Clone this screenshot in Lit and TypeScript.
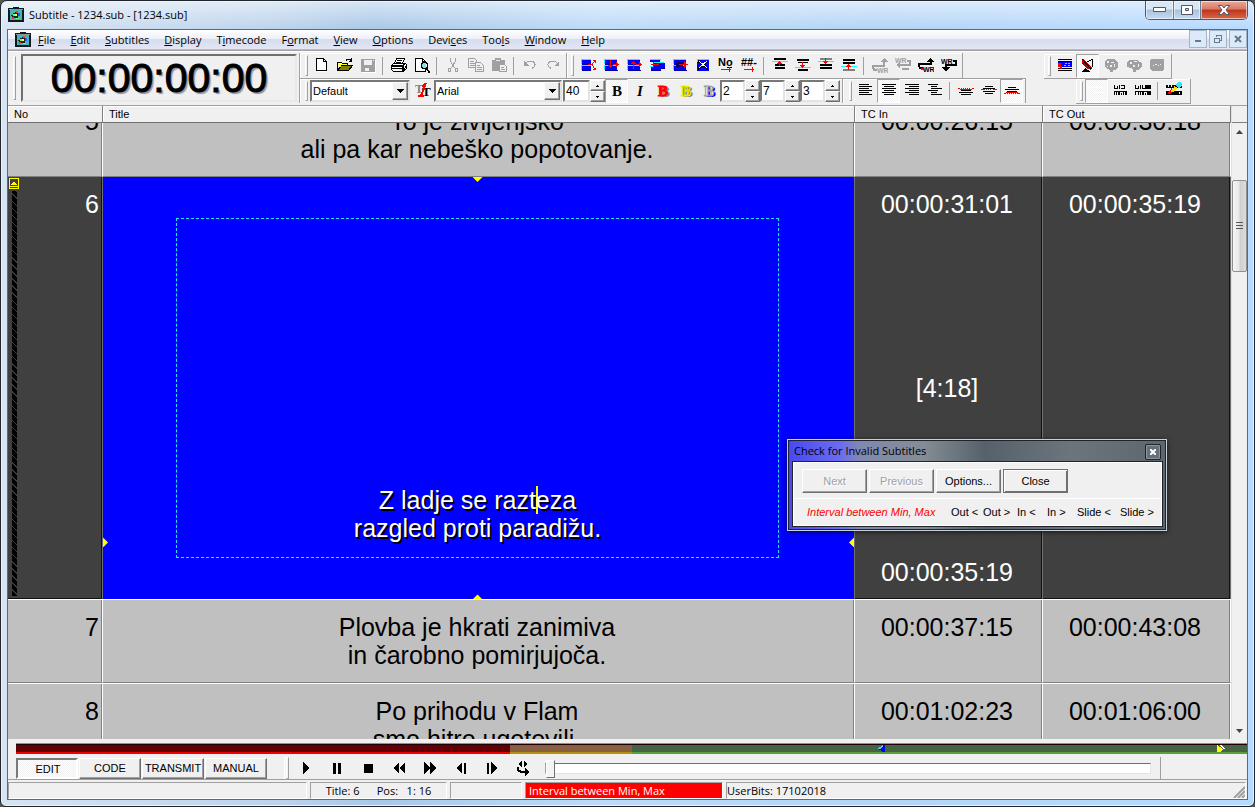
import { LitElement, html, css, svg, nothing, TemplateResult } from "lit";
import { customElement, state, query } from "lit/decorators.js";
import { classMap } from "lit/directives/class-map.js";

type Glyph = unknown;

/* Pixel runs: each "x y w h" group becomes one filled rectangle. */
const px = (fill: string, runs: string): Glyph => {
  const d = runs
    .split(",")
    .map((r) => r.trim().split(" "))
    .map(([x, y, w, h]) => `M${x} ${y}h${w}v${h}h-${w}z`)
    .join("");
  return svg`<path fill=${fill} d=${d}></path>`;
};
const shape = (fill: string, d: string): Glyph => svg`<path fill=${fill} d=${d}></path>`;
const line = (stroke: string, d: string, w = 1): Glyph =>
  svg`<path fill="none" stroke=${stroke} stroke-width=${w} d=${d}></path>`;
const label = (fill: string, x: number, y: number, size: number, text: string, family = "Liberation Sans"): Glyph =>
  svg`<text x=${x} y=${y} fill=${fill} font-size=${size} font-weight="700" font-family=${family}>${text}</text>`;

const G = "#a0a0a0";
const block = (extra: Glyph): Glyph => [
  px("#00ffff", "1 2 13 1,1 2 1 5,1 8 13 1,1 8 1 5"),
  px("#0000ff", "2 3 12 4,2 9 12 4"),
  px("#0000a0", "2 7 13 1,2 13 13 1"),
  extra,
];

const icons: Record<string, Glyph> = {
  new: [shape("#fff", "M3 2h6l4 4v9h-10z"), line("#000", "M2.5 1.5h7l3 3v9h-10zM9.5 1.5v3h3")],
  open: [
    shape("#ffff80", "M1 5h4l1 1h5v3h-10z"),
    shape("#808000", "M1 14l4-6h11l-4 6z"),
    line("#000", "M.5 13.5v-8h4l1 1h5v2M.5 13.5l4-5h11l-4 5zM9 3.5c1-2 4-2 5 0M14.5 1v3h-3"),
    line("#ffff00", "M2 7.5h8M2 9.500h2"),
  ],
  save: [px(G, "1 2 14 13"), px("#f0f0f0", "4 3 8 5,5 11 5 3,13 3 1 1"), px(G, "9 11 2 3"), px("#fff", "15 3 1 13,2 15 14 1")],
  print: [
    shape("#fff", "M5 1h8l-2 6h-8z"),
    line("#000", "M5.500 1.500h8l-2 5h-8zM6 3.500h5M5 5.500h5"),
    shape("#fff", "M1 8l2-2h12v6l-3 3h-10l-1-2z"),
    line("#000", "M.5 8.500l2-2h12l1 1v4l-3 3h-10l-2-2zM.5 8.500h11l3-2M11.500 9v5M1 11.500h10M13 12.500l2-3"),
    px("#ffff00", "8 12 3 1"),
    px("#000", "1 9 10 1,12 8 1 6"),
  ],
  preview: [
    shape("#fff", "M1 1h8l3 3v11h-11z"),
    line("#000", "M1.500 1.500h7l3 3v10h-10zM8.500 1.500v3h3"),
    shape("#80e0e8", "M8 6h4v5h-4z"),
    line("#000", "M8.500 5.500h4v1h1v4h-1v1h-4v-1h-1v-4h1z"),
    line("#000", "M12 11l4 5", 2),
  ],
  cut: [
    line(G, "M5.500 1v3l4 7M10.500 1v3l-4 7", 1),
    line(G, "M3.500 11.500h2v3h-2zM10.500 11.500h2v3h-2z", 1),
    px(G, "7 7 2 2"),
  ],
  copy: [line(G, "M.5 1.500h6l2 2v7h-8zM2 4.500h4M2 6.500h5M2 8.500h5"), shape("#f0f0f0", "M7 5h6l3 3v7h-9z"), line(G, "M7.500 5.500h5l3 3v6h-8zM9 8.500h3M9 10.500h5M9 12.500h5")],
  paste: [px(G, "1 3 13 11,4 1 6 3"), px("#f0f0f0", "5 3 4 1"), shape("#f0f0f0", "M8 7h6l2 2v6h-8z"), line(G, "M8.500 7.500h5l2 2v5h-7zM10 10.500h3M10 12.500h4")],
  undo: [line(G, "M3 6.500c3-3 10-3 10 1c0 2-1 3-3 4"), shape(G, "M2 4v5h5z")],
  redo: [line(G, "M13 6.500c-3-3-10-3-10 1c0 2 1 3 3 4"), shape(G, "M14 4v5h-5z")],
  split: block([px("#f0f0f0", "11 2 4 12"), line("#ff0000", "M8 7.500h4l3-4M12 7.500l3 5M13 3.500h2v2M13 12.500h2v-2")]),
  insertDown: block(line("#ff0000", "M7.500 3v8M5 8.500h5M6 9.500h3M10 7.500h6M13.500 5v5M14.500 6v3")),
  insertUp: block(line("#ff0000", "M7.500 4v8M5 6.500h5M6 5.500h3M10 7.500h6M13.500 5v5M14.500 6v3")),
  joinLeft: [px("#00ffff", "1 2 11 1,5 5 10 1,1 9 10 1"), px("#0000ff", "1 3 10 2,5 6 11 5,2 10 10 3"), px("#0000a0", "2 13 10 1"), px("#000080", "12 11 4 1"), line("#ff0000", "M2 7.500h8M4.500 5v5")],
  joinRight: block([px("#000080", "4 5 7 5"), line("#ff0000", "M7 7.500h9M13.500 5v5M12.500 4v7")]),
  remove: [px("#0000ff", "2 2 12 12"), px("#00ffff", "2 2 12 1,2 2 1 3"), px("#000080", "2 8 12 1"), line("#000", "M3 4l10 8M13 4l-10 8", 2), line("#fff", "M4 4l8 7M12 4l-8 7")],
  number: [label("#000", 0, 9, 11, "No"), px("#000", "9 10 5 1"), line("#ff0000", "M3 12.500h10M11.500 10v5")],
  hash: [label("#000", 0, 9, 11, "##-"), line("#ff0000", "M3 12.500h10M11.500 10v5")],
  topIn: [px("#000", "2 1 12 2,3 7 10 2,3 10 10 2"), px("#00ffff", "0 4 16 1"), line("#ff0000", "M7.500 4v5M5 6.500h5M6 5.500h3")],
  topOut: [px("#000", "2 2 12 2,3 5 10 1,3 12 10 2"), px("#00ffff", "0 10 16 1"), line("#ff0000", "M7.500 5v6M5 8.500h5M6 9.500h3")],
  botIn: [px("#000", "2 7 12 2,2 10 12 2"), px("#808080", "2 1 12 2"), px("#00ffff", "0 4 16 1"), line("#ff0000", "M7.500 1v6M5 4.500h5M6 5.500h3")],
  botOut: [px("#000", "2 2 12 2,2 5 12 2"), px("#808080", "2 12 12 2"), px("#00ffff", "0 9 16 1"), line("#ff0000", "M7.500 7v6M5 9.500h5M6 8.500h3")],
  wr1: [line(G, "M5 12.500h-3l-1-2v-2h11v-4", 2), shape(G, "M8 5l4-4l4 4z"), label(G, 5, 16, 7, "WR")],
  wr2: [label(G, 0, 6, 7, "WR"), line(G, "M12 3.500h3v4h-12M7 11.500h7", 2), shape(G, "M5 4v7l-4-3z")],
  wr3: [line("#000", "M5 11h-3l-1-2v-2h12v-3", 2), shape("#000", "M8 5l4-4l4 4z"), px("#ff0000", "3 11 3 2"), label("#000", 5, 15, 7, "WR")],
  wr4: [label("#000", 0, 7, 7, "WR"), line("#000", "M12 4h3v4h-10v4", 2), shape("#000", "M1 10h8l-4 5z")],
  left: px("#000", "1 2 10 1,1 4 13 1,1 6 10 1,1 8 13 1,1 10 10 1,1 12 13 1"),
  center: px("#000", "1 2 14 1,3 4 10 1,1 6 14 1,3 8 10 1,1 10 14 1,3 12 10 1"),
  right: px("#000", "1 2 14 1,5 4 10 1,1 6 14 1,5 8 10 1,1 10 14 1,5 12 10 1"),
  indent: px("#000", "1 2 10 1,4 4 6 1,4 6 11 1,1 8 10 1,4 10 6 1,4 12 11 1"),
  vTop: [px("#000", "3 8 10 1,1 10 14 1,3 12 10 1"), px("#ff0000", "0 6 2 1,3 6 1 1,5 6 1 1,7 6 1 1,9 6 1 1,11 6 1 1,14 6 2 1,2 7 12 1")],
  vMid: [px("#000", "4 4 8 1,2 6 12 1,2 9 12 1,4 11 8 1"), px("#ff0000", "0 7 4 1,5 7 1 1,7 7 1 1,9 7 1 1,12 7 4 1")],
  vBot: [px("#000", "4 5 8 1,1 7 14 1,3 9 10 1"), px("#ff0000", "0 11 2 1,3 11 1 1,5 11 1 1,7 11 1 1,9 11 1 1,11 11 1 1,13 11 3 1,2 10 12 1")],
  screen: [px("#000", "1 2 14 1,1 4 14 1,1 11 14 1,1 13 14 1"), px("#0000ff", "1 5 14 5"), px("#00ffff", "8 6 2 1,11 6 2 1,7 8 2 1,11 8 2 1"), px("#ff0000", "1 6 3 4,3 9 2 3")],
  dish: [shape("#c00000", "M2 2l3 1l7 8l-1 2l-5-2l-4-5z"), line("#000", "M2 2l9 10M7 5l6-3M12.500 3v7"), shape("#000", "M1 15l4-4l5 3v1z"), px("#fff", "13 1 1 1,14 3 1 1")],
  reel: [shape(G, "M4 2h7l4 4v5l-3 2h-2v2h-3v-2l-5-3v-5z"), px("#f0f0f0", "4 4 2 2,8 5 3 1,7 8 2 2,11 7 1 3,4 9 1 1")],
  reel2: [shape(G, "M3 3h8l5 3v4l-4 3h-2v2h-3v-3l-6-2v-4z"), px("#f0f0f0", "4 5 2 2,8 4 3 1,7 8 2 2,12 7 1 3")],
  balloon: [shape(G, "M2 2h12l1 1v9l-2 2h-10l-2-2v-9z"), px("#f0f0f0", "4 8 1 1,6 7 2 1,9 8 1 1,11 7 1 1")],
  blank: px("#fff", "1 5 3 1,6 5 4 1,12 5 2 1,2 10 4 1,8 10 6 1"),
  tc1: px("#000", "2 3 1 4,2 6 4 1,5 4 1 3,7 3 1 4,9 3 4 1,12 4 1 3,9 6 4 1,2 9 13 1,2 9 1 4,4 10 1 3,6 10 2 3,9 11 1 2,11 10 1 3,13 10 2 3"),
  tc2: px("#000", "0 3 1 4,0 6 4 1,3 4 1 3,5 3 1 4,7 3 1 4,7 6 3 1,10 3 6 4,0 9 12 1,0 9 1 4,3 10 1 3,5 10 1 3,7 10 2 3,10 11 1 2,12 9 4 4"),
  paint: [px("#000", "0 3 16 3,0 9 16 4"), px("#f0f0f0", "2 3 1 2,5 3 1 2,2 10 1 2,13 10 1 2"), line("#ff0000", "M3 12l4-5", 3), line("#ffe000", "M6 10l4-5", 3), shape("#40e0e8", "M9 3l3-3h2l2 2v2l-3 2z")],
  font: [
    label("#808080", 0, 11, 12, "T", "Liberation Serif"),
    label("#000", 7, 14, 13, "T", "Liberation Serif"),
    line("#ff0000", "M11 1l-5 13M7 5l3-3M3 14h6", 2),
  ],
  play: shape("#000", "M5 2l6 6l-6 6z"),
  pause: px("#000", "4 3 3 11,9 3 3 11"),
  stop: px("#000", "4 4 9 9"),
  rewind: shape("#000", "M8 2v12l-6-6zM14 2v12l-6-6z"),
  forward: shape("#000", "M2 2v12l6-6zM8 2v12l6-6z"),
  stepBack: [shape("#000", "M9 2v12l-6-6z"), px("#000", "11 3 2 11")],
  stepFwd: [shape("#000", "M7 2v12l6-6z"), px("#000", "3 3 2 11")],
  loop: [shape("#000", "M7 1v6l-4-3zM9 1v6l4-3zM10 8l5 4l-5 4z"), line("#000", "M3 7v3l3 2h5", 2)],
};

const icon = (name: string): TemplateResult =>
  html`<svg class="ic" viewBox="0 0 16 16" shape-rendering="crispEdges" aria-hidden="true">${icons[name]}</svg>`;

const appLogo = html`<svg class="logo" viewBox="0 0 16 16" shape-rendering="crispEdges" aria-hidden="true">
  <path fill="#101820" d="M5 0h6v1h5v14h-16v-14h5z"></path>
  <path fill="#8898a0" d="M1 2h14v1h-14z"></path>
  <path fill="#40b8b8" d="M2 3h12v10h-12z"></path>
  <path fill="#222" d="M5 6h2v-1h3v1h2v3h-2v2h-6v-2h-1v-1h2z"></path>
  <path fill="#ff3030" d="M8 4h2v2h-2zM4 10h2v2h-2z"></path>
  <path fill="#3050ff" d="M10 6h2v3h-2z"></path>
  <path fill="#60ff60" d="M5 7h2v2h-2zM8 11h3v1h-3z"></path>
  <path fill="#ffff60" d="M7 7h2v2h-2z"></path>
</svg>`;

const MENU: [string, number][] = [
  ["File", 0], ["Edit", 0], ["Subtitles", 0], ["Display", 0], ["Timecode", 1], ["Format", 1],
  ["View", 0], ["Options", 0], ["Devices", 4], ["Tools", 3], ["Window", 0], ["Help", 0],
];

interface Row { no: number; lines: string[]; tin: string; out: string; dur?: string; }
const ROWS: Row[] = [
  { no: 5, lines: ["To je življenjsko", "ali pa kar nebeško popotovanje."], tin: "00:00:26:15", out: "00:00:30:18" },
  { no: 6, lines: ["Z ladje se razteza", "razgled proti paradižu."], tin: "00:00:31:01", out: "00:00:35:19", dur: "[4:18]" },
  { no: 7, lines: ["Plovba je hkrati zanimiva", "in čarobno pomirjujoča."], tin: "00:00:37:15", out: "00:00:43:08" },
  { no: 8, lines: ["Po prihodu v Flam", "smo hitro ugotovili,"], tin: "00:01:02:23", out: "00:01:06:00" },
];

@customElement("app-root")
export class AppRoot extends LitElement {
  @state() private mode = "EDIT";
  @query(".sheet") private sheet!: HTMLElement;

  protected firstUpdated(): void {
    this.sheet.scrollTop = 30;
  }

  static styles = css`
    :host { display: block; font: 11px/14px "Liberation Sans", Arial, sans-serif; color: #000; }
    * { box-sizing: border-box; }
    button, input, select { font: inherit; color: inherit; margin: 0; padding: 0; border: 0; border-radius: 0; background: none; }
    svg { display: block; flex: none; }
    .ic { width: 16px; height: 16px; }
    .segoe { font: 11px/14px "Open Sans", "Noto Sans", sans-serif; }
    .desk { background: #555; height: 100vh; min-height: 600px; }
    .window {
      position: relative; height: 100%; display: flex; flex-direction: column;
      border: 1px solid #20242c; border-radius: 7px 7px 6px 6px; padding: 0 6px 6px;
      background: linear-gradient(180deg, #fff8 0, #fff0 28px), linear-gradient(90deg, #d6e4f3 0, #bcd3ec 22%, #a9c8e8 30%, #bddbf8 48%, #b4d5f6 70%, #b7daff 100%);
      box-shadow: inset 0 0 0 1px #e8f4ff;
    }
    .titlebar { height: 28px; flex: none; display: flex; align-items: center; padding-left: 1px; }
    .logo { width: 16px; height: 16px; }
    .titlebar h1 { margin: 0 0 0 5px; font-size: 11px; font-weight: 400; flex: 1; }
    .sys { align-self: flex-start; display: flex; height: 19px; border: 1px solid #4a5a70; border-top: 0; border-radius: 0 0 5px 5px; overflow: hidden; }
    .sys button { width: 27px; display: grid; place-items: center; background: linear-gradient(#d9e6f4 45%, #a9c1dc 50%, #c6dcf3); box-shadow: inset 0 0 0 1px #ffffff90; }
    .sys button + button { border-left: 1px solid #6b7c93; }
    .sys .x { width: 47px; background: linear-gradient(#e9a99a 0, #d87a66 45%, #c0341b 50%, #d2694a); }
    .client { flex: 1; min-height: 0; display: flex; flex-direction: column; border: 1px solid #5d6978; background: #f0f0f0; }
    .menubar { height: 20px; flex: none; display: flex; align-items: center; padding-left: 7px; background: linear-gradient(#fff 0, #eef0f9 45%, #d6dded 50%, #e2e6f5 100%); border-bottom: 1px solid #b6bccc; }
    .menubar nav { display: flex; gap: 15px; margin-left: 7px; flex: 1; }
    .menubar u { text-underline-offset: 1px; }
    .mdi { display: flex; gap: 2px; align-self: stretch; }
    .mdi button { width: 18px; height: 18px; display: grid; place-items: center; border: 1px solid #a5b5c9; background: #dce9f8; }

    .bars { flex: none; height: 56px; display: flex; padding: 2px 0; border-top: 1px solid #a0a0a0; border-bottom: 1px solid #a0a0a0; box-shadow: inset 0 1px #fff; }
    .clock { width: 292px; display: flex; align-items: center; border-right: 1px solid #a0a0a0; padding: 1px 2px 1px 3px; gap: 3px; }
    .clock output { flex: 1; align-self: stretch; display: grid; place-items: center; border: 2px solid; border-color: #707070 #e8e8e8 #e8e8e8 #707070; font-size: 41px; line-height: 44px; -webkit-text-stroke: 1px #000; text-shadow: 2px 2px 1px #8c93a4; }
    .grip { width: 3px; align-self: stretch; margin: 2px; border: 1px solid; border-color: #fff #a0a0a0 #a0a0a0 #fff; flex: none; }
    .stack { display: flex; flex-direction: column; }
    .line { display: flex; height: 26px; }
    .line .band { align-self: stretch; }
    .band { display: flex; align-items: center; padding: 0 2px; border-right: 1px solid #a0a0a0; box-shadow: inset 1px 1px #fff; }
    .line .first { padding-left: 3px; }
    .line + .line { height: 25px; }
    .line + .line .band { border-top: 1px solid #a0a0a0; }
    .line + .line .band + .band { padding-left: 4px; }
    .tb { width: 23px; height: 24px; flex: none; display: grid; place-items: start center; padding: 3px 0 0 1px; }
    .on { background: repeating-conic-gradient(#fff 0 25%, #f0f0f0 0 50%) 0 0 / 2px 2px; border: 1px solid; border-color: #a0a0a0 #fff #fff #a0a0a0; }
    .tb.on { padding-top: 2px; }
    .sep { width: 1px; height: 18px; margin: 0 4px 0 3px; background: #a0a0a0; flex: none; }
    .sunk { border: 2px solid; border-color: #787878 #e3e3e3 #e3e3e3 #787878; background: #fff; }
    .combo { display: flex; height: 22px; margin-right: 1px; }
    .combo select { flex: 1; min-width: 0; appearance: none; padding-left: 1px; background: #fff; font-size: 11px; line-height: 15px; }
    .raised { border: 1px solid; border-color: #fff #707070 #707070 #fff; background: #f0f0f0; box-shadow: inset -1px -1px #a0a0a0; }
    .drop { width: 16px; display: grid; place-items: center; }
    .w98 { width: 100px; }
    .w127 { width: 128px; }
    .spin { display: flex; height: 22px; }
    .spin input { width: 25px; padding-left: 1px; font-size: 12px; }
    .spin.wide input { width: 27px; }
    .spin span { display: flex; flex-direction: column; width: 15px; }
    .spin span button { flex: 1; display: grid; place-items: center; }
    .b { font: 700 15px/18px "Liberation Serif", serif; }
    .i { font-style: italic; }
    .red { color: #f00; text-shadow: 2px 1px #808080; -webkit-text-stroke: 1px #f00; }
    .yel { color: #909000; text-shadow: 2px 1px #808080; -webkit-text-stroke: 1px #ee0; }
    .blu { color: #f0f0f0; text-shadow: 2px 1px #00f; -webkit-text-stroke: 1px #999; }
    .extras { margin: 1px 56px 0 auto; display: flex; flex-direction: column; align-items: flex-end; }
    .extras .band { height: 25px; border-bottom: 1px solid #a0a0a0; padding-right: 5px; }
    .extras .upper { margin-right: 19px; padding-right: 3px; }

    .body { flex: 1; min-height: 0; display: flex; }
    .sheet { flex: 1; min-width: 0; overflow: hidden; }
    table { width: 100%; table-layout: fixed; border-collapse: separate; border-spacing: 0; font-size: 25px; line-height: 28px; }
    .c1 { width: 95px; }
    .c3 { width: 188px; }
    th { position: sticky; top: 0; z-index: 1; height: 17px; padding: 0 6px; text-align: left; font: 11px/14px "Liberation Sans", Arial, sans-serif; background: #f0f0f0; border-right: 1px solid #808080; border-bottom: 1px solid #707070; box-shadow: inset 1px 1px #fff; }
    td { height: 84px; padding: 13px 5px 0 2px; vertical-align: top; text-align: center; background: #c0c0c0; border-top: 1px solid #fff; border-bottom: 1px solid #808080; border-right: 1px solid #fff; box-shadow: inset -1px 0 #808080; }
    td.no { text-align: right; padding-right: 3px; }
    .cur td { height: 1px; padding: 0; background: #404040; color: #fff; border-top: 0; border-bottom: 0; border-right-color: #707070; box-shadow: inset -1px -1px #111; }
    .cell { height: 100%; display: flex; }
    .times { flex-direction: column; justify-content: space-between; align-items: center; padding: 13px 3px 13px 0; }
    .mark { width: 12px; display: flex; flex-direction: column; align-items: center; gap: 2px; padding: 1px 0 3px; }
    .mark svg { width: 10px; height: 11px; }
    .hatch { flex: 1; width: 5px; background: repeating-linear-gradient(45deg, #000 0 4px, #3a3a3a 4px 5px); }
    .num { flex: 1; padding: 13px 3px; }
    .cur td.video { background: #00f; box-shadow: none; }
    .picture { position: relative; aspect-ratio: 16 / 9; padding: 41px 75px 41px 73px; display: flex; }
    .safe { flex: 1; border: 1px dashed #20e8ff; display: flex; flex-direction: column; justify-content: flex-end; padding-bottom: 15px; text-shadow: 2px 2px #000; }
    .safe p { margin: 0; }
    .caret { border-left: 2px solid #ff0; margin-right: -2px; }
    .tip { position: absolute; width: 10px; height: 5px; background: #ff0; }
    .tip.t { top: 0; left: 50%; margin-left: -6px; clip-path: polygon(0 0, 100% 0, 50% 100%); }
    .tip.bt { bottom: 0; left: 50%; margin-left: -6px; clip-path: polygon(0 100%, 100% 100%, 50% 0); }
    .tip.l { width: 5px; height: 10px; left: 0; bottom: 52px; clip-path: polygon(0 0, 100% 50%, 0 100%); }
    .tip.r { width: 5px; height: 10px; right: 0; bottom: 52px; clip-path: polygon(100% 0, 0 50%, 100% 100%); }
    .scroll { width: 16px; display: flex; flex-direction: column; background: #f0f0f0; border-left: 1px solid #e0e0e0; }
    .stub { height: 17px; border-bottom: 1px solid #808080; flex: none; }
    .scroll button { height: 17px; display: grid; place-items: center; flex: none; }
    .rail { flex: 1; padding-top: 40px; }
    .thumb { height: 92px; border: 1px solid #8f8f8f; border-radius: 2px; background: linear-gradient(90deg, #f5f5f5 0, #e8e8e8 45%, #cfcfd2 55%, #dcdcdc); display: grid; place-items: center; }

    .track { flex: none; height: 11px; margin: 4px 0 0 8px; display: flex; border-top: 1px solid #909090; }
    .track div { border-top: 1px solid #200008; border-bottom: 2px solid; position: relative; }
    .track .seg1 { flex: 494; background: #600000; border-bottom-color: #f00000; }
    .track .seg2 { flex: 122; background: #886040; border-bottom-color: #b89010; }
    .track .seg3 { flex: 615; background: #446444; border-bottom-color: #58a040; }
    .seg3 svg { position: absolute; top: 0; width: 8px; height: 7px; }
    .in { left: 40%; }
    .outp { right: 22px; }
    .controls { flex: none; height: 26px; display: flex; align-items: center; padding: 3px 0 0 8px; border-bottom: 1px solid #a0a0a0; }
    .mode { width: 62px; height: 21px; margin-right: 1px; text-align: center; font-size: 11px; white-space: nowrap; }
    .mode.on { border: 2px solid; border-color: #787878 #fff #fff #787878; padding: 2px 0 0 2px; }
    .transport { display: flex; align-items: center; align-self: stretch; margin-left: 16px; border-left: 1px solid #fff; }
    .transport button { width: 31px; display: grid; place-items: center; padding-left: 1px; }
    .transport .grip { margin: 0 1px; }
    .seek { flex: 1; appearance: none; height: 20px; margin-left: 7px; background: none; }
    .seek::-webkit-slider-runnable-track { height: 11px; background: #fff; border: 1px solid; border-color: #707070 #e3e3e3 #e3e3e3 #a0a0a0; }
    .seek::-webkit-slider-thumb { appearance: none; width: 9px; height: 18px; margin-top: -4px; background: #f4f4f4; border: 1px solid; border-color: #fff #707070 #707070 #fff; }
    .tail { width: 87px; align-self: stretch; margin-left: 9px; border-left: 1px solid #a0a0a0; }
    .status { flex: none; height: 19px; display: flex; gap: 3px; padding: 2px 1px 0 0; }
    .status div { border: 1px solid; border-color: #a0a0a0 #fff #fff #a0a0a0; white-space: pre; padding: 0 3px; line-height: 15px; }
    .s1 { width: 299px; }
    .s2 { width: 137px; text-align: center; }
    .s3 { width: 72px; }
    .status .alert { width: 198px; background: #f00; color: #fff; }
    .s5 { flex: 1; display: flex; justify-content: space-between; align-items: flex-end; }
    .status .s5 { padding: 0; }

    .dialog { position: absolute; top: 438px; right: 87px; width: 380px; border: 1px solid #c8d0d8; outline: 1px solid #20242a; outline-offset: -2px; padding: 1px 4px 4px 5px; background: linear-gradient(90deg, #4848f0 0, #6c6cf0 14%, #8088b0 19%, #848d94 36%, #56616b 52%, #6c757c 75%, #5c666e 100%); box-shadow: 0 1px 5px #000a; }
    .dialog header { display: flex; align-items: center; justify-content: space-between; height: 21px; padding: 0 1px; }
    .dialog h2 { margin: 0 0 2px; font: inherit; }
    .dialog header button { width: 16px; height: 16px; border: 1px solid #222; border-radius: 2px; background: #66717b; box-shadow: inset 0 0 0 1px #8d97a0; display: grid; place-items: center; }
    .pane { border: 1px solid #fff; outline: 1px solid #20242a; background: #f0f0f0; }
    .keys { display: flex; gap: 2px; height: 36px; padding: 6px 8px; border-bottom: 1px solid #fff; }
    .keys button { width: 65px; height: 24px; }
    .keys button:disabled { color: #a0a0a0; text-shadow: 1px 1px #fff; }
    .keys .def { border-color: #707070; box-shadow: inset 1px 1px #fff, inset -1px -1px #707070; }
    .links { display: grid; grid-template-columns: 144px 32px 34px 30px 30px 43px auto; align-items: center; justify-items: start; height: 26px; padding-left: 13px; white-space: nowrap; }
    .links em { color: #f00; }
  `;

  private tb(name: string, label: string, on = false, disabled = false) {
    return html`<button class=${classMap({ tb: true, on })} aria-label=${label} ?disabled=${disabled}>${icon(name)}</button>`;
  }

  private spin(value: string, label: string, wide = false) {
    return html`<div class=${classMap({ spin: true, wide })}>
      <input class="sunk" aria-label=${label} .value=${value} />
      <span>
        <button class="raised" aria-label="Increase"><svg width="3" height="2" shape-rendering="crispEdges"><path d="M1 0h1v1h1v1h-3v-1h1z"></path></svg></button>
        <button class="raised" aria-label="Decrease"><svg width="3" height="2" shape-rendering="crispEdges"><path d="M0 0h3v1h-1v1h-1v-1h-1z"></path></svg></button>
      </span>
    </div>`;
  }

  private combo(value: string, label: string, cls: string) {
    return html`<div class="combo sunk ${cls}">
      <select aria-label=${label}><option>${value}</option></select>
      <span class="drop raised"><svg width="7" height="4" shape-rendering="crispEdges"><path d="M0 0h7v1h-1v1h-1v1h-1v1h-1v-1h-1v-1h-1v-1h-1z"></path></svg></span>
    </div>`;
  }

  private current(r: Row) {
    return html`<tr class="cur">
      <td class="no"><div class="cell">
        <div class="mark">
          <svg viewBox="0 0 10 11" shape-rendering="crispEdges"><path fill="none" stroke="#ff0" d="M.5.5h9v10h-9zM0 8.500h10"></path><path fill="#ff0" d="M5 3l3 4h-6z"></path></svg>
          <div class="hatch"></div>
        </div>
        <div class="num">${r.no}</div>
      </div></td>
      <td class="video"><div class="picture">
        <i class="tip t"></i><i class="tip bt"></i><i class="tip l"></i><i class="tip r"></i>
        <div class="safe"><p>Z ladje se razt<span class="caret"></span>eza</p><p>${r.lines[1]}</p></div>
      </div></td>
      <td><div class="cell times"><span>${r.tin}</span><span>${r.dur}</span><span>${r.out}</span></div></td>
      <td><div class="cell times"><span>${r.out}</span></div></td>
    </tr>`;
  }

  render() {
    const sep = html`<i class="sep"></i>`;
    const grip = html`<i class="grip"></i>`;
    return html`<div class="desk"><div class="window">
      <div class="titlebar segoe">
        ${appLogo}<h1>Subtitle - 1234.sub - [1234.sub]</h1>
        <div class="sys">
          <button aria-label="Minimize"><svg width="13" height="6"><path d="M.5.5h12v4h-12z" fill="#fff" stroke="#535666"></path></svg></button>
          <button aria-label="Maximize"><svg width="13" height="10"><path d="M.5.5h11v9h-11zM4.500 3.500h3v2h-3z" fill="#fff" stroke="#535666" fill-rule="evenodd"></path></svg></button>
          <button class="x" aria-label="Close window"><svg width="12" height="10"><path d="M.5.5h3.500l2 2.500l2-2.500h3.500l-3.500 4.500l3.500 4.500h-3.500l-2-2.500l-2 2.500h-3.500l3.500-4.500z" fill="#fff" stroke="#535666"></path></svg></button>
        </div>
      </div>
      <div class="client">
        <div class="menubar segoe">
          ${appLogo}
          <nav>${MENU.map(([t, k]) => html`<button>${t.slice(0, k)}<u>${t[k]}</u>${t.slice(k + 1)}</button>`)}</nav>
          <div class="mdi">
            <button aria-label="Minimize document"><svg width="8" height="8"><path d="M1 5h6v2h-6z" fill="#66788e"></path></svg></button>
            <button aria-label="Restore document"><svg width="10" height="10" shape-rendering="crispEdges"><path d="M3.500 3v-2h5v5h-2M1.500 4.500h5v4h-5z" fill="none" stroke="#66788e" stroke-width="1"></path></svg></button>
            <button aria-label="Close document"><svg width="8" height="8"><path d="M1 1l6 6M7 1l-6 6" stroke="#66788e" stroke-width="2"></path></svg></button>
          </div>
        </div>
        <div class="bars">
          <div class="clock">${grip}<output>00:00:00:00</output></div>
          <div class="stack">
            <div class="line">
              <div class="band first">${grip}
                ${this.tb("new", "New")}${this.tb("open", "Open")}${this.tb("save", "Save", false, true)}${sep}
                ${this.tb("print", "Print")}${this.tb("preview", "Print preview")}${sep}
                ${this.tb("cut", "Cut", false, true)}${this.tb("copy", "Copy", false, true)}${this.tb("paste", "Paste", false, true)}${sep}
                ${this.tb("undo", "Undo", false, true)}${this.tb("redo", "Redo", false, true)}
              </div>
              <div class="band">${grip}
                ${this.tb("split", "Split")}${this.tb("insertDown", "Insert after")}${this.tb("insertUp", "Insert before")}${this.tb("joinLeft", "Join previous")}
                ${this.tb("joinRight", "Join next")}${this.tb("remove", "Delete title")}${this.tb("number", "Renumber")}${this.tb("hash", "Shift numbers")}${sep}
                ${this.tb("topIn", "In up")}${this.tb("topOut", "In down")}${this.tb("botIn", "Out up")}${this.tb("botOut", "Out down")}${sep}
                ${this.tb("wr1", "Wrap back", false, true)}${this.tb("wr2", "Wrap line", false, true)}${this.tb("wr3", "Wrap up")}${this.tb("wr4", "Wrap down")}
              </div>
            </div>
            <div class="line">
              <div class="band first">${grip}
                ${this.combo("Default", "Style", "w98")}${this.tb("font", "Font")}${this.combo("Arial", "Font name", "w127")}
                ${this.spin("40", "Font size", true)}
                <button class="tb on b">B</button><button class="tb b i">I</button>
                <button class="tb b red" aria-label="Text colour">B</button><button class="tb b yel" aria-label="Outline colour">B</button><button class="tb b blu" aria-label="Shadow colour">B</button>
                ${this.spin("2", "Outline width")}${this.spin("7", "Shadow width")}${this.spin("3", "Shadow offset")}
              </div>
              <div class="band">${grip}
                ${this.tb("left", "Align left")}${this.tb("center", "Align centre", true)}${this.tb("right", "Align right")}${this.tb("indent", "Align block")}${sep}
                ${this.tb("vTop", "Align top")}${this.tb("vMid", "Align middle")}${this.tb("vBot", "Align bottom", true)}
              </div>
            </div>
          </div>
          <div class="extras">
            <div class="band upper">${grip}
              ${this.tb("screen", "Screen")}${this.tb("dish", "Transmit", true)}${this.tb("reel", "Reel", false, true)}${this.tb("reel2", "Next reel", false, true)}${this.tb("balloon", "Comment", false, true)}
            </div>
            <div class="band">${grip}
              ${this.tb("blank", "No timecode", true)}${this.tb("tc1", "Internal timecode")}${this.tb("tc2", "External timecode")}${sep}${this.tb("paint", "Colours")}
            </div>
          </div>
        </div>
        <div class="body">
          <div class="sheet"><table>
            <colgroup><col class="c1" /><col /><col class="c3" /><col class="c3" /></colgroup>
            <thead><tr><th>No</th><th>Title</th><th>TC In</th><th>TC Out</th></tr></thead>
            <tbody>${ROWS.map((r) => r.dur ? this.current(r) : html`<tr>
              <td class="no">${r.no}</td><td>${r.lines[0]}<br />${r.lines[1] ?? nothing}</td><td>${r.tin}</td><td>${r.out}</td>
            </tr>`)}</tbody>
          </table></div>
          <div class="scroll">
            <div class="stub"></div>
            <button aria-label="Scroll up"><svg width="7" height="4"><path d="M0 4l3.500-4l3.500 4z" fill="#444"></path></svg></button>
            <div class="rail"><div class="thumb"><svg width="7" height="8" shape-rendering="crispEdges"><path d="M0 0h7v1h-7zM0 3h7v1h-7zM0 6h7v1h-7z" fill="#555"></path></svg></div></div>
            <button aria-label="Scroll down"><svg width="7" height="4"><path d="M0 0l3.500 4l3.500-4z" fill="#444"></path></svg></button>
          </div>
        </div>
        <div class="track">
          <div class="seg1"></div><div class="seg2"></div>
          <div class="seg3">
            <svg class="in" viewBox="0 0 8 7" shape-rendering="crispEdges"><path d="M0 3.500l5-3.500h2v7h-2z" fill="#00f"></path><path d="M0 3.500l5-3.500v2l-3 2z" fill="#4cf"></path></svg>
            <svg class="outp" viewBox="0 0 8 7" shape-rendering="crispEdges"><path d="M0 0l6 4l-3 3h-3z" fill="#ff0"></path><path d="M3 0h2l3 4h-2z" fill="#fff"></path></svg>
          </div>
        </div>
        <div class="controls">
          ${["EDIT", "CODE", "TRANSMIT", "MANUAL"].map((m) => html`<button
            class=${classMap({ mode: true, raised: this.mode !== m, on: this.mode === m })}
            @click=${() => (this.mode = m)}>${m}</button>`)}
          <div class="transport">${grip}
            ${["play", "pause", "stop", "rewind", "forward", "stepBack", "stepFwd", "loop"].map((n) => html`<button aria-label=${n}>${icon(n)}</button>`)}
          </div>
          <input class="seek" type="range" min="0" max="100" value="0" aria-label="Position" />
          <div class="tail"></div>
        </div>
        <div class="status segoe">
          <div class="s1"></div><div class="s2">Title: 6      Pos:   1: 16</div><div class="s3"></div>
          <div class="alert">Interval between Min, Max</div>
          <div class="s5">UserBits: 17102018<svg width="12" height="12"><path d="M1 12l11-11M5 12l7-7M9 12l3-3" stroke="#a0a0a0" stroke-width="2"></path></svg></div>
        </div>
      </div>
      <section class="dialog" role="dialog" aria-label="Check for Invalid Subtitles">
        <header class="segoe"><h2>Check for Invalid Subtitles</h2><button aria-label="Close dialog"><svg width="6" height="6"><path d="M0 0l6 6M6 0l-6 6" stroke="#fff" stroke-width="2"></path></svg></button></header>
        <div class="pane">
          <div class="keys"><button class="raised" disabled>Next</button><button class="raised" disabled>Previous</button><button class="raised">Options...</button><button class="raised def">Close</button></div>
          <div class="links"><em>Interval between Min, Max</em><button>Out &lt;</button><button>Out &gt;</button><button>In &lt;</button><button>In &gt;</button><button>Slide &lt;</button><button>Slide &gt;</button></div>
        </div>
      </section>
    </div></div>`;
  }
}
